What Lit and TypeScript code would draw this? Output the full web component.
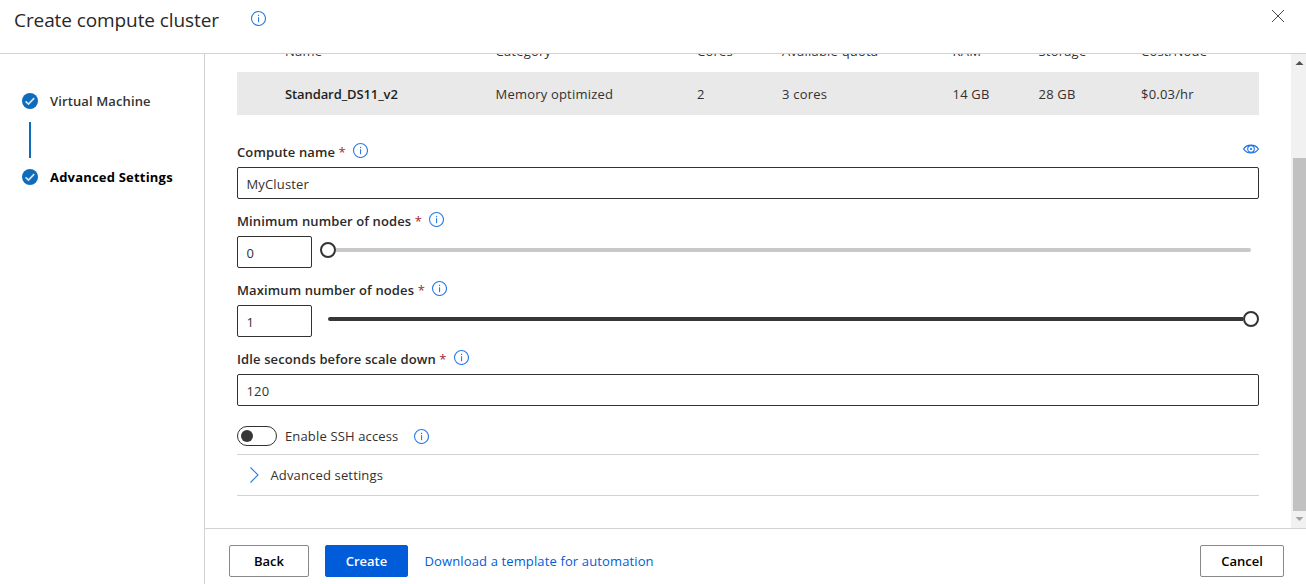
import { LitElement, html, css, svg, nothing } from "lit";
import { customElement, property } from "lit/decorators.js";

const infoIcon = html`<svg class="info" width="16" height="16" viewBox="0 0 16 16" fill="none">
  <circle cx="8.5" cy="8.5" r="7" stroke="#2b7be4" stroke-width="1.1" />
  <rect x="8" y="4.8" width="1.1" height="1.3" fill="#2b7be4" />
  <rect x="8" y="7.2" width="1.1" height="5" fill="#2b7be4" />
</svg>`;

const base = css`
  * { box-sizing: border-box; }
  .info { display: block; flex: none; }
`;

@customElement("wizard-step")
class WizardStep extends LitElement {
  @property() label = "";
  @property({ type: Boolean }) current = false;
  static styles = [base, css`
    :host { display: flex; align-items: center; gap: 12px; height: 16px; font-size: 13px; font-weight: 600; color: #333; white-space: nowrap; }
    svg { display: block; }
    .text { letter-spacing: 0.12px; }
    .current { font-weight: 700; color: #000; letter-spacing: 0.2px; }
  `];
  render() {
    return html`<svg width="16" height="16" viewBox="0 0 16 16">
        <circle cx="8" cy="8" r="8" fill="#0f6cbd" />
        <path d="M3.6 8.3 6.5 11.1 12.2 5.2" fill="none" stroke="#d5e6f5" stroke-width="1.7" />
      </svg><span class="text ${this.current ? "current" : ""}">${this.label}</span>`;
  }
}

@customElement("form-field")
class FormField extends LitElement {
  @property() label = "";
  @property() value = "";
  @property() slider = "";
  @property({ type: Boolean }) preview = false;
  static styles = [base, css`
    :host { display: block; height: 69px; }
    .label { display: flex; align-items: center; height: 37px; font-size: 13px; font-weight: 600; color: #2b2a29; white-space: nowrap; }
    .text { padding-top: 7px; letter-spacing: 0.12px; }
    .star { color: #a4262c; padding: 7px 0 0 3.5px; font-weight: 500; }
    .label .info { margin: 3px 0 0 6.2px; }
    .eye { display: block; margin: 0 0 0 auto; }
    .row { display: flex; gap: 8px; }
    .box { height: 32px; flex: 1; border: 1px solid #323130; border-radius: 2px; padding: 6px 8.5px 0; font-size: 13px; line-height: 20px; letter-spacing: 0.15px; color: #323130; }
    .small { flex: none; width: 75px; }
    .slider { flex: 1; height: 28px; display: flex; align-items: center; }
    .track { height: 4px; flex: 1; background: #c8c8c8; border-radius: 0 2px 2px 0; margin-right: 8px; }
    .knob { width: 16px; height: 16px; border: 2px solid #333; border-radius: 50%; background: #fff; flex: none; }
    .max .track { background: #373737; margin: 0 0 0 8px; border-radius: 2px 0 0 2px; }
  `];
  render() {
    const knob = html`<div class="knob"></div>`;
    return html`
      <div class="label">
        <span class="text">${this.label}</span><span class="star">*</span>${infoIcon}
        ${this.preview ? html`<svg class="eye" width="16" height="10" viewBox="0 0 16 10" fill="none" stroke="#1a6fe0">
          <path d="M.6 5C3.8-.2 12.2-.2 15.4 5 12.2 10.2 3.8 10.2.6 5Z" stroke-width="1.2" />
          <circle cx="8" cy="5" r="3.3" stroke-width="1.1" /><circle cx="8" cy="5" r="1.1" fill="#1a6fe0" stroke="none" />
        </svg>` : nothing}
      </div>
      <div class="row">
        <div class="box ${this.slider ? "small" : ""}">${this.value}</div>
        ${this.slider ? html`<div class="slider ${this.slider}">
          ${this.slider === "min" ? knob : nothing}<div class="track"></div>${this.slider === "max" ? knob : nothing}
        </div>` : nothing}
      </div>`;
  }
}

@customElement("app-root")
class AppRoot extends LitElement {
  static styles = [base, css`
    :host { display: flex; flex-direction: column; width: 1306px; height: 584px; background: #fff; overflow: hidden; font-family: "Open Sans", "Noto Sans", sans-serif; font-size: 13px; letter-spacing: 0.15px; color: #323130; white-space: nowrap; }
    header { height: 54px; flex: none; display: flex; align-items: flex-start; border-bottom: 1px solid #d2d2d2; padding: 0 21px 0 14px; }
    h1 { margin: 5px 0 0; font-size: 19px; line-height: 30px; font-weight: 400; letter-spacing: -0.09px; width: 236px; color: #292827; }
    header .info { margin-top: 10px; }
    .close { display: block; margin: 9px 0 0 auto; }
    .body { flex: 1; display: flex; min-height: 0; }
    nav { width: 205px; flex: none; border-right: 1px solid #d2d2d2; padding: 39px 0 0 22px; }
    .line { width: 2px; height: 36px; margin: 13px 0 11px 7px; background: #0f6cbd; }
    main { flex: 1; display: flex; flex-direction: column; min-width: 0; }
    .scroll { height: 474px; flex: none; display: flex; overflow: hidden; }
    .content { flex: 1; padding: 0 32px; }
    .cols { display: grid; grid-template-columns: 210.5px 201.5px 85px 170.5px 86px 102.5px 1fr; align-items: center; padding-left: 48px; height: 43px; }
    .head { margin-top: -25px; font-weight: 500; letter-spacing: 0.2px; }
    .row { background: #e9e9e9; margin-bottom: 15px; letter-spacing: 0.2px; }
    .name { font-weight: 600; letter-spacing: -0.1px; color: #201f1e; }
    .ssh { display: flex; align-items: center; height: 20px; margin: 20px 0 8px; }
    .toggle { width: 40px; height: 20px; border: 1px solid #323130; border-radius: 10px; padding: 3px; margin-right: 8px; }
    .dot { width: 12px; height: 12px; border-radius: 50%; background: #373737; }
    .ssh .info { margin-left: 15px; }
    .adv { display: flex; align-items: center; height: 42px; border: solid #d2d2d2; border-width: 1px 0; padding-left: 12px; gap: 10.5px; }
    .adv svg { display: block; }
    .bar { width: 15px; background: #f1f1f1; display: flex; flex-direction: column; align-items: flex-end; }
    .bar svg { display: block; flex: none; }
    .thumb { width: 13px; height: 353px; background: #c1c1c1; margin-top: 87px; }
    footer { flex: 1; display: flex; align-items: flex-start; border-top: 1px solid #d2d2d2; padding: 16px 22px 0 24px; }
    .btn { height: 32px; border: 1px solid #8a8886; border-radius: 2px; text-align: center; line-height: 31px; font-weight: 600; letter-spacing: 0; color: #000; }
    .back { width: 80px; margin-right: 16px; }
    .create { width: 83px; background: #015cda; border-color: #015cda; color: #fff; margin-right: 16.5px; }
    .cancel { width: 84px; margin-left: auto; }
    .link { color: #015cda; line-height: 32px; letter-spacing: 0.13px; }
  `];
  private head = ["Name", "Category", "Cores", "Available quota", "RAM", "Storage", "Cost/Node"];
  private cells = ["Standard_DS11_v2", "Memory optimized", "2", "3 cores", "14 GB", "28 GB", "$0.03/hr"];
  private arrow(d: string, fill: string) {
    return html`<svg width="15" height="17" viewBox="0 0 15 17">${svg`<path d=${d} fill=${fill} />`}</svg>`;
  }
  render() {
    return html`
      <header>
        <h1>Create compute cluster</h1>${infoIcon}
        <svg class="close" width="14" height="14" viewBox="0 0 14 14"><path d="M1 1 13 13M13 1 1 13" stroke="#494847" stroke-width="1" /></svg>
      </header>
      <div class="body">
        <nav>
          <wizard-step label="Virtual Machine"></wizard-step>
          <div class="line"></div>
          <wizard-step label="Advanced Settings" current></wizard-step>
        </nav>
        <main>
          <div class="scroll">
            <div class="content">
              <div class="cols head">${this.head.map((t) => html`<span>${t}</span>`)}</div>
              <div class="cols row">${this.cells.map((t, i) => html`<span class=${i ? "" : "name"}>${t}</span>`)}</div>
              <form-field label="Compute name" value="MyCluster" preview></form-field>
              <form-field label="Minimum number of nodes" value="0" slider="min"></form-field>
              <form-field label="Maximum number of nodes" value="1" slider="max"></form-field>
              <form-field label="Idle seconds before scale down" value="120"></form-field>
              <div class="ssh"><div class="toggle"><div class="dot"></div></div><span>Enable SSH access</span>${infoIcon}</div>
              <div class="adv">
                <svg width="11" height="18" viewBox="0 0 11 18"><path d="M1.5 1.5 9 9 1.5 16.5" fill="none" stroke="#2b7be4" stroke-width="1.1" /></svg>
                <span>Advanced settings</span>
              </div>
            </div>
            <div class="bar">
              ${this.arrow("M4.5 11 8.5 7 12.5 11Z", "#505050")}
              <div class="thumb"></div>
              ${this.arrow("M4.5 6 8.5 10 12.5 6Z", "#a3a3a3")}
            </div>
          </div>
          <footer>
            <div class="btn back">Back</div>
            <div class="btn create">Create</div>
            <span class="link">Download a template for automation</span>
            <div class="btn cancel">Cancel</div>
          </footer>
        </main>
      </div>`;
  }
}
